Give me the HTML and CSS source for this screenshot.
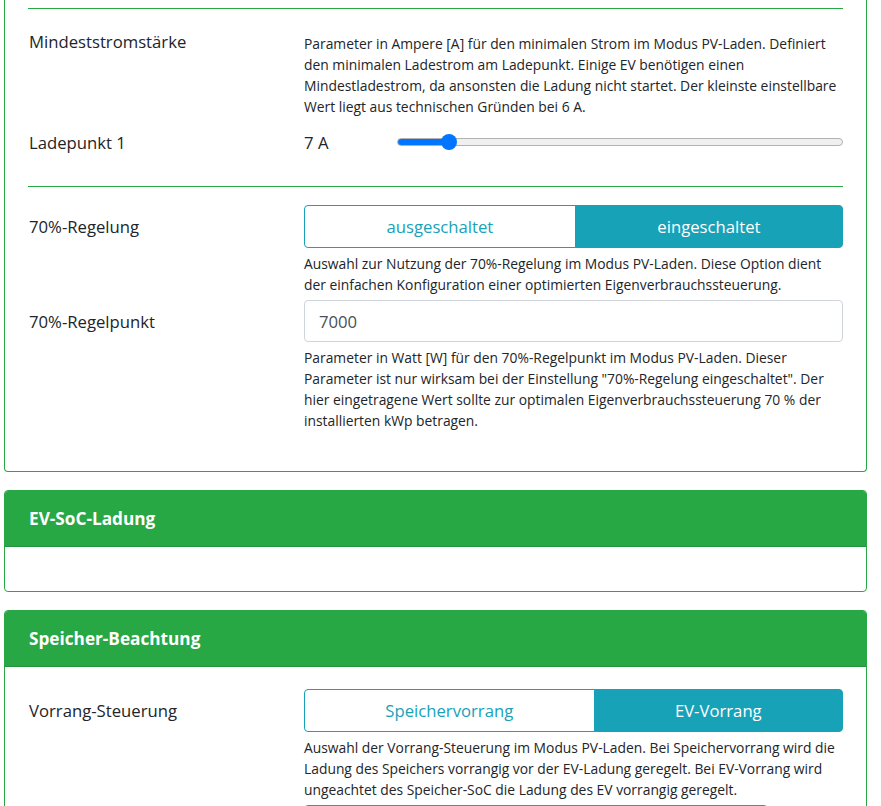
FILE: index.html
```html
<!DOCTYPE html>
<html lang="de">
<head>
<meta charset="utf-8">
<title>PV-Laden</title>
<link rel="stylesheet" href="styles.css">
</head>
<body>
<div class="page">
  <section class="card card-cut">
    <div class="card-body body-first">
      <hr class="sep sep-top">
      <div class="row row-first">
        <div class="label">Mindeststromstärke</div>
        <div class="field">
          <p class="help help-first">Parameter in Ampere [A] für den minimalen Strom im Modus PV-Laden. Definiert den minimalen Ladestrom am Ladepunkt. Einige EV benötigen einen Mindestladestrom, da ansonsten die Ladung nicht startet. Der kleinste einstellbare Wert liegt aus technischen Gründen bei 6 A.</p>
        </div>
      </div>
      <div class="row row-slider">
        <div class="label label-plain">Ladepunkt 1</div>
        <div class="field slider-field">
          <span class="slider-value">7 A</span>
          <input class="range" type="range" min="6" max="16" step="1" value="7" style="--fill: 51px">
        </div>
      </div>
      <hr class="sep">
      <div class="row">
        <div class="label label-btn">70%-Regelung</div>
        <div class="field">
          <div class="btn-group">
            <button class="btn btn-off">ausgeschaltet</button>
            <button class="btn btn-on">eingeschaltet</button>
          </div>
          <p class="help">Auswahl zur Nutzung der 70%-Regelung im Modus PV-Laden. Diese Option dient der einfachen Konfiguration einer optimierten Eigenverbrauchssteuerung.</p>
        </div>
      </div>
      <div class="row">
        <div class="label label-btn">70%-Regelpunkt</div>
        <div class="field">
          <input class="text-input" type="text" value="7000">
          <p class="help">Parameter in Watt [W] für den 70%-Regelpunkt im Modus PV-Laden. Dieser Parameter ist nur wirksam bei der Einstellung "70%-Regelung eingeschaltet". Der hier eingetragene Wert sollte zur optimalen Eigenverbrauchssteuerung 70 % der installierten kWp betragen.</p>
        </div>
      </div>
    </div>
  </section>

  <section class="card">
    <header class="card-header">EV-SoC-Ladung</header>
    <div class="card-body body-empty"></div>
  </section>

  <section class="card">
    <header class="card-header">Speicher-Beachtung</header>
    <div class="card-body">
      <div class="row">
        <div class="label label-btn">Vorrang-Steuerung</div>
        <div class="field">
          <div class="btn-group">
            <button class="btn btn-off">Speichervorrang</button>
            <button class="btn btn-on">EV-Vorrang</button>
          </div>
          <p class="help">Auswahl der Vorrang-Steuerung im Modus PV-Laden. Bei Speichervorrang wird die Ladung des Speichers vorrangig vor der EV-Ladung geregelt. Bei EV-Vorrang wird ungeachtet des Speicher-SoC die Ladung des EV vorrangig geregelt.</p>
        </div>
      </div>
      <div class="row">
        <div class="label"></div>
        <div class="field">
          <div class="next-control"></div>
        </div>
      </div>
    </div>
  </section>
</div>
</body>
</html>
```
FILE: styles.css
```css
* { box-sizing: border-box; }

html, body {
  margin: 0;
  padding: 0;
  background: #fff;
  overflow: hidden;
}

body {
  font-family: "Open Sans", "Noto Sans", sans-serif;
  font-size: 16.7px;
  color: #212529;
}

.page {
  width: 863px;
  margin-left: 4px;
  display: flex;
  flex-direction: column;
  gap: 18px;
}

.card {
  border: 1px solid #28a745;
  border-radius: 4px;
  background: #fff;
  overflow: hidden;
}

.card-cut {
  border-top: none;
  border-top-left-radius: 0;
  border-top-right-radius: 0;
}

.card-header {
  background: #28a745;
  color: #fff;
  font-weight: 700;
  font-size: 17.2px;
  height: 56px;
  padding: 0 23px 0 24px;
  display: flex;
  align-items: center;
  border-bottom: 1px solid #23923c;
}

.card-body {
  padding: 22px 23px 0;
}

.body-first {
  padding-top: 8px;
  padding-bottom: 35px;
}

.body-empty {
  height: 44px;
}

.sep {
  border: 0;
  border-top: 1px solid #28a745;
  margin: 19px 0 18px;
  height: 0;
}

.sep-top {
  margin-top: 0;
}

.row {
  display: grid;
  grid-template-columns: 276px 1fr;
  margin-bottom: 5px;
}

.row-first {
  margin-bottom: 0;
}

.label {
  line-height: 25px;
  padding-left: 1px;
}

.row-first .label {
  padding-top: 2px;
}

.label-btn {
  padding-top: 9px;
}

.field {
  min-width: 0;
}

.help {
  margin: 5px 0 0;
  font-size: 13.85px;
  line-height: 21px;
  color: #212529;
}

.help-first {
  margin-top: 6px;
}

.row-slider {
  height: 50px;
  align-items: center;
  margin-bottom: 0;
}

.slider-field {
  display: flex;
  align-items: center;
}

.slider-value {
  width: 93px;
  flex: none;
  line-height: 25px;
}

.range {
  -webkit-appearance: none;
  appearance: none;
  flex: 1;
  margin: 0;
  height: 16px;
  background: transparent;
}

.range::-webkit-slider-runnable-track {
  height: 8px;
  border-radius: 4px;
  border: 1px solid #b2b2b2;
  background: linear-gradient(to right, #0075ff 0, #0075ff var(--fill), #efefef var(--fill));
}

.range::-webkit-slider-thumb {
  -webkit-appearance: none;
  appearance: none;
  width: 16px;
  height: 16px;
  border-radius: 50%;
  background: #0075ff;
  border: none;
  margin-top: -5px;
}

.btn-group {
  display: flex;
  height: 43px;
}

.next-control {
  width: 464px;
  height: 43px;
  border: 1px solid #17a2b8;
  border-radius: 4px;
}

.btn {
  flex: 1 1 auto;
  font-family: inherit;
  font-size: 16.7px;
  line-height: 25px;
  padding: 0 12px;
  border: 1px solid #17a2b8;
  cursor: pointer;
}

.btn-off {
  background: #fff;
  color: #17a2b8;
  border-radius: 4px 0 0 4px;
}

.btn-on {
  background: #17a2b8;
  color: #fff;
  border-radius: 0 4px 4px 0;
  margin-left: -1px;
}

.text-input {
  display: block;
  width: 100%;
  height: 42px;
  padding: 0 14px;
  font-family: inherit;
  font-size: 16.7px;
  color: #495057;
  border: 1px solid #ced4da;
  border-radius: 4px;
  background: #fff;
}
```
